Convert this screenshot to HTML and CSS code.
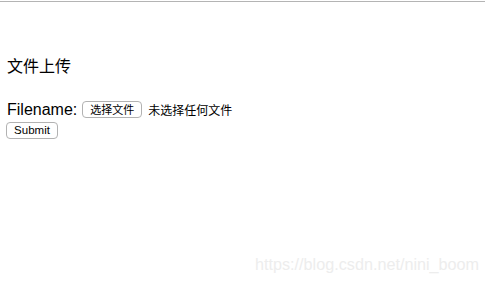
FILE: index.html
```html
<!DOCTYPE html>
<html lang="zh-CN">
<head>
<meta charset="utf-8">
<title>文件上传</title>
<link rel="stylesheet" href="styles.css">
</head>
<body>
<div class="topline"></div>
<main class="page">
  <h3 class="title">文件上传</h3>
  <form class="upload">
    <div class="row">
      <span class="label">Filename:</span>
      <button type="button" class="btn btn-file">选择文件</button>
      <span class="nofile">未选择任何文件</span>
    </div>
    <div class="row-submit">
      <button type="button" class="btn btn-submit">Submit</button>
    </div>
  </form>
</main>
<div class="watermark">https://blog.csdn.net/nini_boom</div>
</body>
</html>
```

FILE: styles.css
```css
html, body {
  margin: 0;
  padding: 0;
  background: #ffffff;
  width: 485px;
  height: 284px;
  overflow: hidden;
}
body {
  font-family: "Liberation Sans", "Noto Sans CJK SC", sans-serif;
  color: #000;
  position: relative;
}
.topline {
  margin-top: 1px;
  height: 1px;
  background: #b4b4b4;
}
.page {
  padding-left: 7px;
}
.title {
  margin: 53px 0 0 0;
  font-family: "Noto Sans CJK SC", "Liberation Sans", sans-serif;
  font-size: 16px;
  font-weight: normal;
  line-height: 20px;
}
.upload {
  margin: 26px 0 0 0;
}
.row {
  display: flex;
  align-items: center;
  height: 17px;
}
.label {
  font-size: 16px;
  line-height: 17px;
}
.btn {
  box-sizing: border-box;
  height: 17px;
  margin: 0;
  border: 1px solid #b2b2b2;
  border-radius: 4px;
  background: #ffffff;
  color: #000;
  font-family: "Liberation Sans", "Noto Sans CJK SC", sans-serif;
  line-height: 15px;
  padding: 0;
}
.btn-file {
  margin-left: 5px;
  width: 60px;
  font-size: 11px;
  font-family: "Noto Sans CJK SC", sans-serif;
}
.nofile {
  margin-left: 6px;
  font-family: "Noto Sans CJK SC", sans-serif;
  font-size: 12px;
  line-height: 17px;
}
.row-submit {
  margin-top: 2px;
  margin-left: -1px;
  height: 17px;
}
.btn-submit {
  width: 52px;
  font-size: 11.5px;
}
.watermark {
  position: absolute;
  left: 255px;
  top: 255px;
  font-family: "Liberation Sans", sans-serif;
  font-size: 16.2px;
  color: #ededed;
}
```
